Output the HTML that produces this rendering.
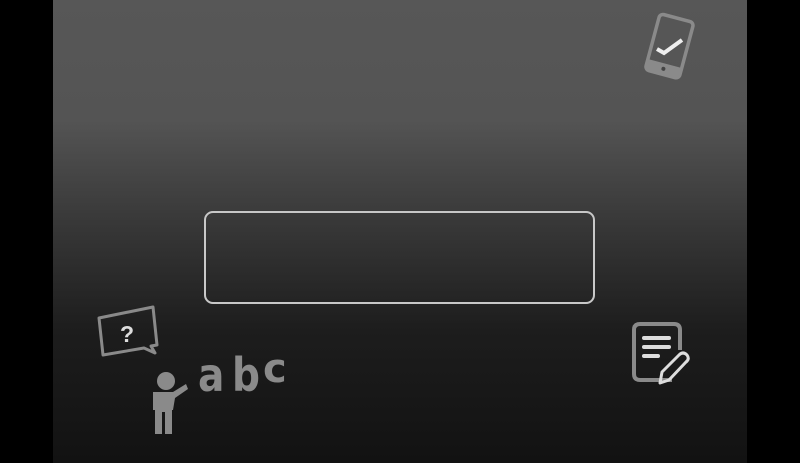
<!DOCTYPE html>
<html><head><style>
html,body{margin:0;padding:0;width:800px;height:463px;background:#000;overflow:hidden}
.main{position:absolute;left:53px;top:0;width:694px;height:463px;background:linear-gradient(#575757 0px,#545454 120px,#363636 230px,#1d1d1d 330px,#121212 463px)}
.box{position:absolute;left:204px;top:211px;width:387px;height:89px;border:2px solid #c8c8c8;border-radius:9px}
svg{position:absolute;left:0;top:0}
</style></head><body>
<div class="main"></div>
<div class="box"></div>
<svg width="800" height="463">
<!-- tablet -->
<g transform="rotate(15 669 46)">
<rect x="652" y="17" width="35" height="58" rx="4" fill="none" stroke="#8a8a8a" stroke-width="3.5"/>
<rect x="652" y="64" width="35" height="11" fill="#8a8a8a"/>
<circle cx="669.5" cy="69.5" r="2" fill="#444"/>
</g>
<path d="M657 49 L664 53 L682 40" fill="none" stroke="#eee" stroke-width="4"/>
<!-- speech bubble -->
<path d="M99 318 L153 307 L157 345 L151 346 L155 353 L144 348 L103 355 Z" fill="none" stroke="#8a8a8a" stroke-width="3" stroke-linejoin="round"/>
<text x="127" y="342" font-family="Liberation Sans,sans-serif" font-weight="bold" font-size="23" fill="#ddd" text-anchor="middle">?</text>
<!-- person -->
<circle cx="166" cy="381" r="9" fill="#8a8a8a"/>
<path d="M153 392 L173 392 L186 384 L188 389 L175 398 L173 410 L172 410 L172 434 L165 434 L165 412 L162 412 L162 434 L155 434 L155 410 L153 410 Z" fill="#8a8a8a"/>
<!-- abc -->
<text x="198" y="391" font-family="DejaVu Sans,sans-serif" font-weight="bold" font-size="46" fill="#8a8a8a" transform="translate(198 391) scale(0.85 1) translate(-198 -391)">a</text>
<text x="232" y="391" font-family="DejaVu Sans,sans-serif" font-weight="bold" font-size="46" fill="#8a8a8a" transform="translate(232 391) scale(0.85 1) translate(-232 -391)">b</text>
<text x="263" y="382" font-family="DejaVu Sans,sans-serif" font-weight="bold" font-size="40" fill="#8a8a8a">c</text>
<!-- doc -->
<path d="M672 380 L640 380 Q634 380 634 374 L634 330 Q634 324 640 324 L674 324 Q680 324 680 330 L680 350" fill="none" stroke="#8a8a8a" stroke-width="4"/>
<rect x="642" y="336" width="29" height="4" rx="2" fill="#ddd"/>
<rect x="642" y="345" width="29" height="4" rx="2" fill="#ddd"/>
<rect x="642" y="354" width="18" height="4" rx="2" fill="#ddd"/>
<path d="M660 383 L662 372 L679 355 Q683 351 687 355 Q690 359 686 362 L669 380 Z" fill="none" stroke="#ddd" stroke-width="3" stroke-linejoin="round"/>
</svg>
</body></html>
